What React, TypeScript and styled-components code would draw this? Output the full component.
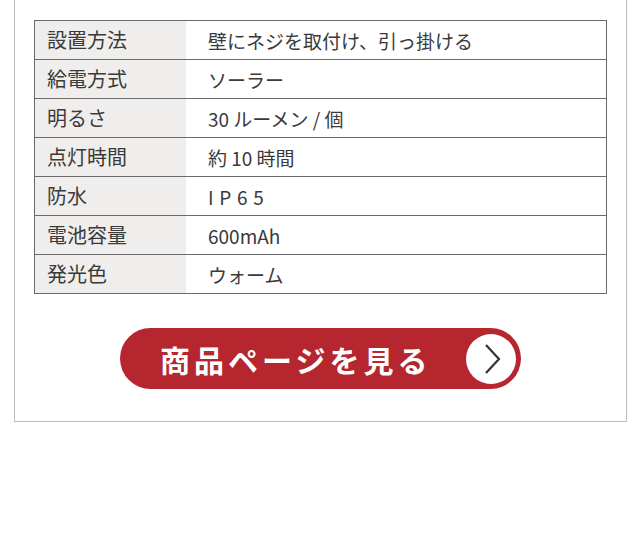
import React from "react";
import styled, { createGlobalStyle } from "styled-components";

const GlobalStyle = createGlobalStyle`
  *, *::before, *::after {
    box-sizing: border-box;
  }
  body {
    margin: 0;
    background: #ffffff;
    font-family: "Noto Sans CJK JP", "Noto Sans", sans-serif;
  }
`;

const specs: { label: string; value: string; spaced?: boolean }[] = [
  { label: "設置方法", value: "壁にネジを取付け、引っ掛ける" },
  { label: "給電方式", value: "ソーラー" },
  { label: "明るさ", value: "30 ルーメン / 個" },
  { label: "点灯時間", value: "約 10 時間" },
  { label: "防水", value: "IP65", spaced: true },
  { label: "電池容量", value: "600mAh" },
  { label: "発光色", value: "ウォーム" },
];

export default function App() {
  return (
    <>
      <GlobalStyle />
      <Panel>
        <SpecTable>
          {specs.map((s) => (
            <Row key={s.label}>
              <Label>{s.label}</Label>
              <Value $spaced={s.spaced}>{s.value}</Value>
            </Row>
          ))}
        </SpecTable>
        <ButtonWrap>
          <PillButton href="#">
            <ButtonText>商品ページを見る</ButtonText>
            <ArrowCircle>
              <svg width="20" height="32" viewBox="0 0 20 32">
                <path
                  d="M3 2 L16 16 L3 30"
                  fill="none"
                  stroke="#333333"
                  strokeWidth="2.2"
                  strokeLinejoin="miter"
                />
              </svg>
            </ArrowCircle>
          </PillButton>
        </ButtonWrap>
      </Panel>
    </>
  );
}

const Panel = styled.div`
  margin-left: 14px;
  width: 613px;
  border: 1px solid #bdbdbd;
  border-top: none;
  padding: 20px 19px 32px 19px;
`;

const SpecTable = styled.div`
  border: 1px solid #6a6a6a;
  display: flex;
  flex-direction: column;
`;

const Row = styled.div`
  display: grid;
  grid-template-columns: 151px 1fr;
  height: 39px;
  border-top: 1.5px solid #6a6a6a;
  &:first-child {
    border-top: none;
    height: 38px;
  }
`;

const Cell = styled.div`
  display: flex;
  align-items: center;
  color: #3a3a3a;
  line-height: 1;
`;

const Label = styled(Cell)`
  background: #efeeec;
  padding-left: 12px;
  font-size: 20px;
`;

const Value = styled(Cell)<{ $spaced?: boolean }>`
  background: #ffffff;
  padding-left: 22px;
  font-size: 19px;
  letter-spacing: ${(p) => (p.$spaced ? "0.3em" : "0")};
`;

const ButtonWrap = styled.div`
  display: flex;
  justify-content: center;
  margin-top: 34px;
`;

const PillButton = styled.a`
  display: flex;
  align-items: center;
  justify-content: space-between;
  width: 401px;
  height: 61px;
  padding: 0 5px 0 40px;
  border-radius: 31px;
  background: #b5262f;
  text-decoration: none;
`;

const ButtonText = styled.span`
  color: #ffffff;
  font-size: 30px;
  font-weight: 700;
  letter-spacing: 4px;
  line-height: 1;
`;

const ArrowCircle = styled.span`
  width: 50px;
  height: 50px;
  border-radius: 50%;
  background: #ffffff;
  display: flex;
  align-items: center;
  justify-content: center;
  padding-left: 3px;
`;
